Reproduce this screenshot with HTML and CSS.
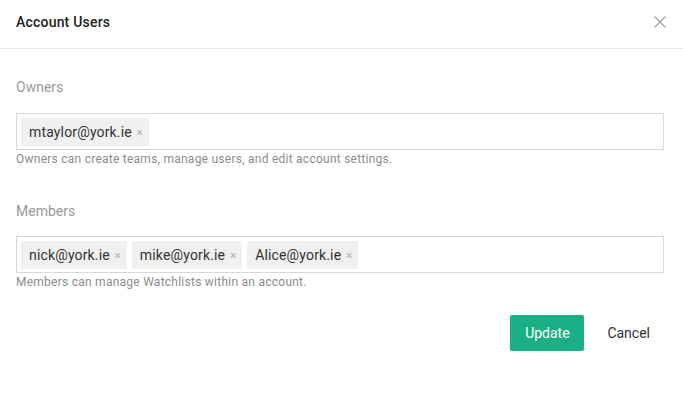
FILE: index.html
```html
<!DOCTYPE html>
<html>
<head>
<meta charset="utf-8">
<link rel="stylesheet" href="styles.css">
</head>
<body>
<div class="modal">
  <div class="header">
    <div class="title">Account Users</div>
    <button class="close" aria-label="Close">
      <svg width="12" height="12" viewBox="0 0 12 12"><path d="M0.5 0.5L11.5 11.5M11.5 0.5L0.5 11.5" stroke="#999" stroke-width="1.1" fill="none"/></svg>
    </button>
  </div>
  <div class="body">
    <div class="field">
      <div class="label">Owners</div>
      <div class="tags">
        <span class="tag">mtaylor@york.ie<span class="x">×</span></span>
      </div>
      <div class="help">Owners can create teams, manage users, and edit account settings.</div>
    </div>
    <div class="field">
      <div class="label">Members</div>
      <div class="tags">
        <span class="tag">nick@york.ie<span class="x">×</span></span>
        <span class="tag">mike@york.ie<span class="x">×</span></span>
        <span class="tag">Alice@york.ie<span class="x">×</span></span>
      </div>
      <div class="help">Members can manage Watchlists within an account.</div>
    </div>
    <div class="actions">
      <button class="btn primary">Update</button>
      <button class="btn link">Cancel</button>
    </div>
  </div>
</div>
</body>
</html>
```
FILE: styles.css
```css
* { box-sizing: border-box; }
html, body { margin: 0; padding: 0; background: #fff; }
body { font-family: Roboto, "Liberation Sans", sans-serif; color: #333; }
.modal { width: 683px; }
.header {
  height: 49px;
  border-bottom: 1px solid #ebebeb;
  display: flex;
  align-items: center;
  justify-content: space-between;
  padding: 0 17px 0 16px;
}
.title { font-size: 14px; font-weight: 500; color: #222; margin-top: -4px; letter-spacing: 0.2px; }
.close { border: 0; background: none; padding: 0; display: flex; margin-top: -4px; cursor: pointer; }
.body { padding: 30px 19px 0 16px; }
.field { display: flex; flex-direction: column; }
.field + .field { margin-top: 36px; }
.label { font-size: 14px; color: #999; line-height: 16px; margin-bottom: 17px; }
.tags {
  border: 1px solid #d9d9d9;
  height: 37px;
  display: flex;
  align-items: center;
  gap: 5px;
  padding: 0 4px;
}
.field:first-child .label { margin-bottom: 18px; }
.tag {
  background: #f0f0f0;
  height: 28px;
  display: inline-flex;
  align-items: center;
  padding: 0 6px 0 8px;
  font-size: 14px;
  letter-spacing: 0.15px;
  color: #333;
}
.x { font-size: 11px; color: #aaa; margin-left: 5px; margin-top: 1px; }
.help { font-size: 12px; color: #8c8c8c; line-height: 16px; margin-top: 1px; letter-spacing: 0.25px; }
.actions { display: flex; justify-content: flex-end; align-items: center; margin-top: 25px; gap: 0; }
.btn { font-family: inherit; font-size: 14px; border: 0; cursor: pointer; }
.primary {
  background: #1aaf84;
  color: #fff;
  width: 74px;
  height: 36px;
  border-radius: 2px;
}
.link { background: none; color: #333; padding: 0 14px 0 23px; height: 36px; }
```
